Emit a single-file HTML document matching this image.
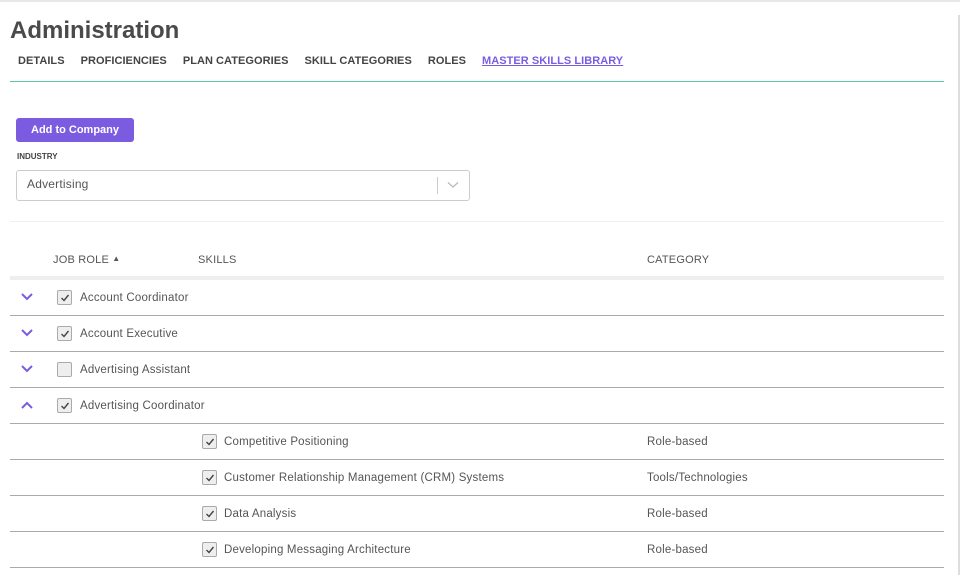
<!DOCTYPE html>
<html><head><style>
body{margin:0;width:960px;height:572px;overflow:hidden;background:#fff;font-family:"Liberation Sans",sans-serif;color:#555;position:relative}
.top{position:absolute;left:0;top:0;width:960px;height:2px;background:#e8e8e8}
.sb{position:absolute;right:0;top:15px;width:2px;height:560px;background:#ddd}
h1{position:absolute;left:10px;top:17px;margin:0;font-size:24px;font-weight:bold;color:#4a4a4a}
.tabs{position:absolute;left:18px;top:55px;font-size:11px;font-weight:bold;color:#444;letter-spacing:0.05px}
.tabs span{margin-right:16px}
.tabs .a{color:#7b5ce0;text-decoration:underline}
.hr{position:absolute;left:10px;top:81px;width:934px;height:1px;background:#5fc4a8}
.btn{position:absolute;left:16px;top:118px;width:118px;height:24px;background:#7b5ce0;border-radius:3px;color:#fff;font-size:11px;font-weight:bold;text-align:center;line-height:24px}
.lbl{position:absolute;left:17px;top:152px;font-size:8px;font-weight:bold;color:#444}
.sel{position:absolute;left:16px;top:170px;width:452px;height:29px;border:1px solid #ccc;border-radius:3px;font-size:12px;line-height:27px}
.sel .t{position:absolute;left:10px;color:#555;letter-spacing:0.2px}
.sel .d{position:absolute;left:420px;top:6px;width:1px;height:17px;background:#ccc}
.sel svg{position:absolute;left:430px;top:10px}
.sep{position:absolute;left:10px;top:221px;width:934px;height:1px;background:#f0f0f0}
.hd{position:absolute;top:254px;font-size:11px;color:#555;letter-spacing:0.2px}
.thick{position:absolute;left:10px;top:276px;width:934px;height:4px;background:#eee}
.row{position:absolute;left:10px;width:934px;height:35px;border-bottom:1px solid #aaa;font-size:11.5px;color:#555;letter-spacing:0.2px}
.row .txt{position:absolute;top:12px}
.cb{position:absolute;top:10px;width:15px;height:15px;border:1px solid #aaa;border-radius:2px;background:#eee;box-sizing:border-box}
.cb svg{position:absolute;left:1.5px;top:1.5px}
.chev{position:absolute;left:11px;top:13px}
</style></head><body>
<div class="top"></div><div class="sb"></div>
<h1>Administration</h1>
<div class="tabs"><span>DETAILS</span><span>PROFICIENCIES</span><span>PLAN CATEGORIES</span><span>SKILL CATEGORIES</span><span>ROLES</span><span class="a">MASTER SKILLS LIBRARY</span></div>
<div class="hr"></div>
<div class="btn">Add to Company</div>
<div class="lbl">INDUSTRY</div>
<div class="sel"><span class="t">Advertising</span><div class="d"></div><svg width="12" height="8" viewBox="0 0 12 8"><path d="M1 1.5L6 6L11 1.5" fill="none" stroke="#bbb" stroke-width="1.3"/></svg></div>
<div class="sep"></div>
<div class="hd" style="left:53px">JOB ROLE <span style="font-size:8px;vertical-align:2px">&#9650;</span></div>
<div class="hd" style="left:198px">SKILLS</div>
<div class="hd" style="left:647px">CATEGORY</div>
<div class="thick"></div>

<div class="row" style="top:280px"><svg class="chev" width="12" height="8" viewBox="0 0 12 8"><path d="M1 1L6 6L11 1" fill="none" stroke="#7b5ce0" stroke-width="2"/></svg><div class="cb" style="left:47px"><svg width="10" height="10" viewBox="0 0 10 10"><path d="M1.5 5L4 7.5L8.5 2" fill="none" stroke="#444" stroke-width="1.4"/></svg></div><span class="txt" style="left:70px">Account Coordinator</span></div>
<div class="row" style="top:316px"><svg class="chev" width="12" height="8" viewBox="0 0 12 8"><path d="M1 1L6 6L11 1" fill="none" stroke="#7b5ce0" stroke-width="2"/></svg><div class="cb" style="left:47px"><svg width="10" height="10" viewBox="0 0 10 10"><path d="M1.5 5L4 7.5L8.5 2" fill="none" stroke="#444" stroke-width="1.4"/></svg></div><span class="txt" style="left:70px">Account Executive</span></div>
<div class="row" style="top:352px"><svg class="chev" width="12" height="8" viewBox="0 0 12 8"><path d="M1 1L6 6L11 1" fill="none" stroke="#7b5ce0" stroke-width="2"/></svg><div class="cb" style="left:47px"></div><span class="txt" style="left:70px">Advertising Assistant</span></div>
<div class="row" style="top:388px"><svg class="chev" width="12" height="8" viewBox="0 0 12 8"><path d="M1 7L6 2L11 7" fill="none" stroke="#7b5ce0" stroke-width="2"/></svg><div class="cb" style="left:47px"><svg width="10" height="10" viewBox="0 0 10 10"><path d="M1.5 5L4 7.5L8.5 2" fill="none" stroke="#444" stroke-width="1.4"/></svg></div><span class="txt" style="left:70px">Advertising Coordinator</span></div>

<div class="row" style="top:424px"><div class="cb" style="left:192px"><svg width="10" height="10" viewBox="0 0 10 10"><path d="M1.5 5L4 7.5L8.5 2" fill="none" stroke="#444" stroke-width="1.4"/></svg></div><span class="txt" style="left:214px">Competitive Positioning</span><span class="txt" style="left:637px">Role-based</span></div>
<div class="row" style="top:460px"><div class="cb" style="left:192px"><svg width="10" height="10" viewBox="0 0 10 10"><path d="M1.5 5L4 7.5L8.5 2" fill="none" stroke="#444" stroke-width="1.4"/></svg></div><span class="txt" style="left:214px">Customer Relationship Management (CRM) Systems</span><span class="txt" style="left:637px">Tools/Technologies</span></div>
<div class="row" style="top:496px"><div class="cb" style="left:192px"><svg width="10" height="10" viewBox="0 0 10 10"><path d="M1.5 5L4 7.5L8.5 2" fill="none" stroke="#444" stroke-width="1.4"/></svg></div><span class="txt" style="left:214px">Data Analysis</span><span class="txt" style="left:637px">Role-based</span></div>
<div class="row" style="top:532px"><div class="cb" style="left:192px"><svg width="10" height="10" viewBox="0 0 10 10"><path d="M1.5 5L4 7.5L8.5 2" fill="none" stroke="#444" stroke-width="1.4"/></svg></div><span class="txt" style="left:214px">Developing Messaging Architecture</span><span class="txt" style="left:637px">Role-based</span></div>
</body></html>
